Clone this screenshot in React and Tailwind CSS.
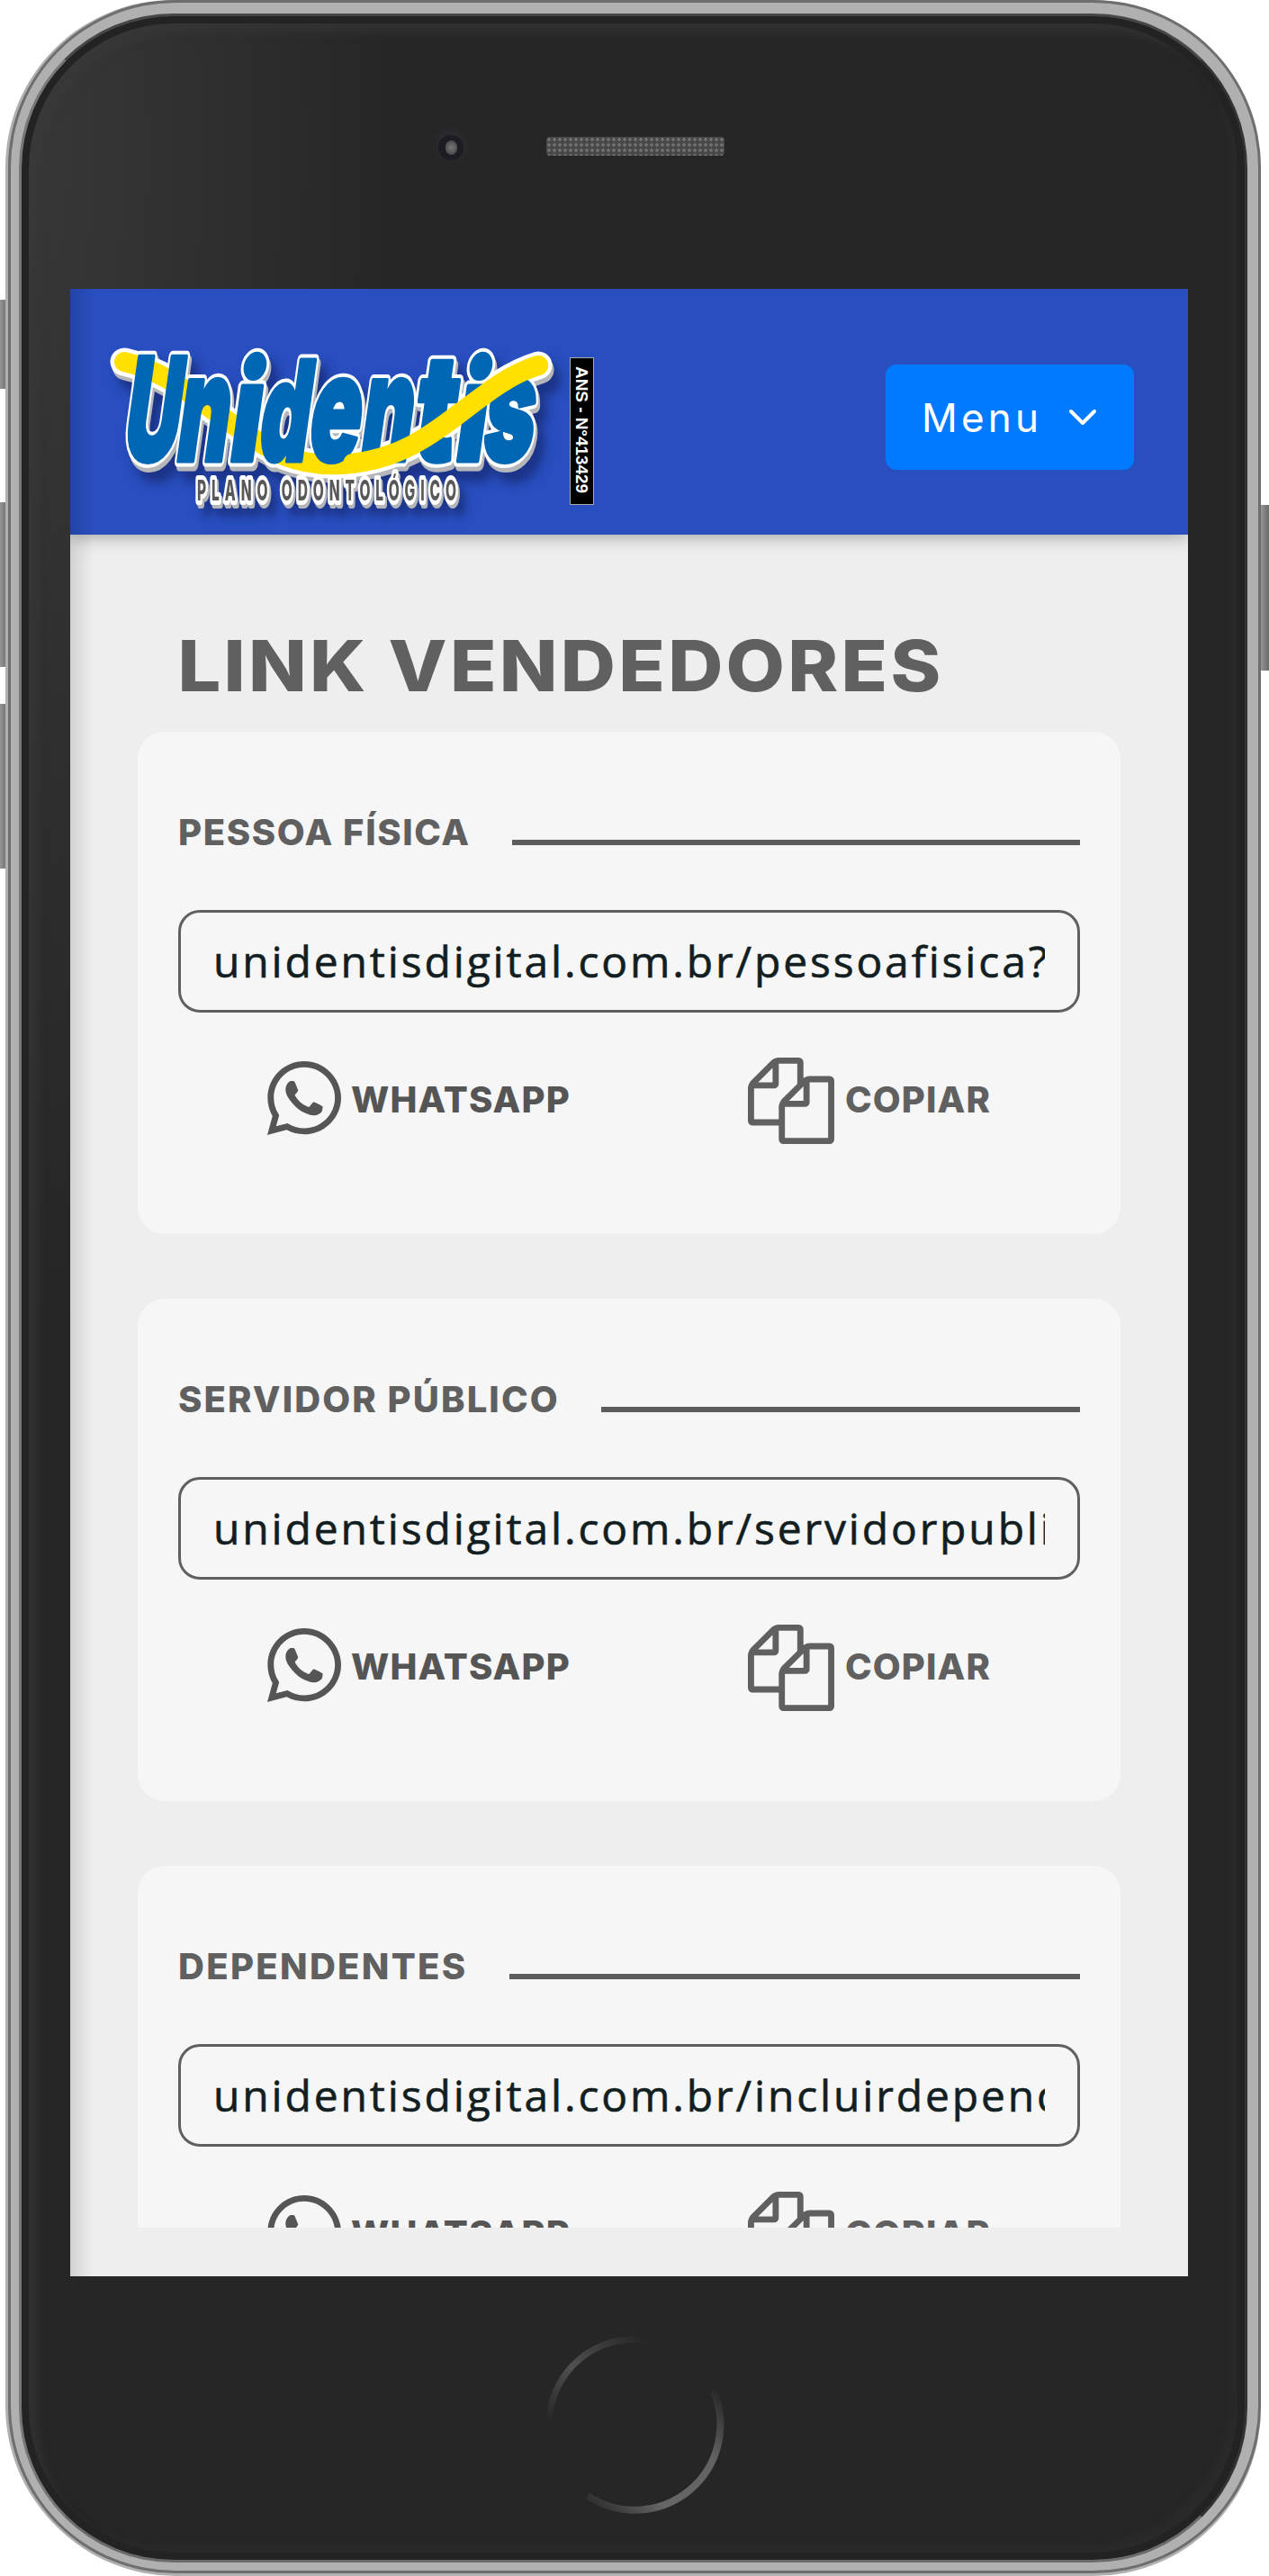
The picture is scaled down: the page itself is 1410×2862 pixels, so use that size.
import { FaWhatsapp } from "react-icons/fa";

const cards = [
  { title: "PESSOA FÍSICA", url: "unidentisdigital.com.br/pessoafisica?v=1", tracking: "tracking-[1.6px]" },
  { title: "SERVIDOR PÚBLICO", url: "unidentisdigital.com.br/servidorpublico", tracking: "tracking-[2.1px]" },
  { title: "DEPENDENTES", url: "unidentisdigital.com.br/incluirdependente", tracking: "tracking-[2.3px]" },
];

// Wordmark letters: glyph, left edge, width and font size
const letters = [
  ["U", 134, 61, 159],
  ["n", 193, 57, 164],
  ["i", 252, 33, 152],
  ["d", 284, 55, 154],
  ["e", 339, 57, 164],
  ["n", 397, 57, 164],
  ["t", 455, 46, 164],
  ["i", 503, 33, 152],
  ["s", 533, 56, 164],
];

const SMILE =
  "M138 402 C175 410 205 432 233 453 C262 474 285 492 315 506 C350 520 385 518 417 510 C490 493 535 425 598 406";
const SMILE_FRONT = "M392 515 C400 514 408 512 417 510 C490 493 535 425 598 406";

function Wordmark(props) {
  return (
    <g
      transform="translate(72.3 0) skewX(-8)"
      fontFamily="Inter, sans-serif"
      fontWeight="900"
      strokeLinejoin="round"
      {...props}
    >
      {letters.map(([ch, x, w, size], i) => (
        <text key={i} x={x} y="512" fontSize={size} textLength={w} lengthAdjust="spacingAndGlyphs">
          {ch}
        </text>
      ))}
    </g>
  );
}

function Logo() {
  return (
    <svg className="ml-[32px] mt-[54px] block h-[215px] w-[560px]" viewBox="110 375 560 215">
      <g className="[filter:drop-shadow(2px_5px_0_#b4b6ba)_drop-shadow(8px_12px_6px_rgba(16,30,90,0.55))]">
        <path d={SMILE} fill="none" stroke="#fff" strokeWidth="31" strokeLinecap="round" />
        <Wordmark fill="#fff" stroke="#fff" strokeWidth="13" />
      </g>
      <path d={SMILE} fill="none" stroke="#ffe000" strokeWidth="22" strokeLinecap="round" />
      <Wordmark fill="#0067b5" stroke="#0067b5" strokeWidth="5" />
      <path d={SMILE_FRONT} fill="none" stroke="#ffe000" strokeWidth="22" strokeLinecap="round" />
      <g className="[filter:drop-shadow(2px_4px_0_#b4b6ba)_drop-shadow(7px_10px_5px_rgba(16,30,90,0.5))]">
        <text
          transform="translate(219 555.5) scale(0.5 1)"
          fontFamily="Inter, sans-serif"
          fontWeight="800"
          fontSize="31"
          textLength="576"
          strokeLinejoin="round"
          fill="#585858"
          stroke="#fff"
          strokeWidth="10"
          paintOrder="stroke"
        >
          PLANO ODONTOLÓGICO
        </text>
      </g>
      <rect x="633.5" y="397.5" width="26" height="163" fill="#000" stroke="#a9a9a9" />
      <text
        transform="translate(640 407) rotate(90)"
        fontFamily="'Liberation Sans', sans-serif"
        fontWeight="700"
        fontSize="19"
        fill="#fff"
        textLength="141"
        lengthAdjust="spacingAndGlyphs"
      >
        ANS - N°413429
      </text>
    </svg>
  );
}

function CopyIcon() {
  return (
    <svg className="h-[96px] w-[96px]" viewBox="0 0 1792 1792" fill="#606060">
      <path d="M1696 384q40 0 68 28t28 68v1216q0 40-28 68t-68 28h-960q-40 0-68-28t-28-68v-288h-544q-40 0-68-28t-28-68v-672q0-40 20-88t48-76l408-408q28-28 76-48t88-20h416q40 0 68 28t28 68v328q68-40 128-40h416zm-544 213l-299 299h299v-299zm-640-384l-299 299h299v-299zm196 647l316-316v-416h-384v416q0 40-28 68t-68 28h-416v640h512v-256q0-40 20-88t48-76zm956 804v-1152h-384v416q0 40-28 68t-68 28h-416v640h896z" />
    </svg>
  );
}

function LinkCard({ title, url, tracking }) {
  return (
    <section className="h-[558px] w-[1092px] shrink-0 rounded-[30px] bg-[#f6f6f6] px-[45px] pt-[88px] text-[#606060]">
      <div className="flex h-[48px] items-center">
        <h2 className={"whitespace-nowrap text-[40px] font-extrabold leading-[48px] " + tracking}>{title}</h2>
        <div className="mb-[10px] ml-[46px] h-[6px] flex-1 self-end bg-[#5c5c5c]" />
      </div>
      <div className="mt-[62px] h-[114px] rounded-[24px] border-[3px] border-[#606060] px-[36px]">
        <div className="h-full overflow-hidden whitespace-nowrap font-['Open_Sans',sans-serif] text-[48px] font-medium leading-[107px] tracking-[2.85px] text-[#121e21] [-webkit-text-stroke:0.6px_#121e21]">
          {url}
        </div>
      </div>
      <div className="mt-[50px] flex h-[96px] items-center pl-[99px] text-[40px] font-extrabold leading-none tracking-[1.1px]">
        <div className="flex w-[534px] items-center gap-[11px] text-[#555]">
          <FaWhatsapp className="mb-[6px] h-[94px] w-[82px]" />
          <span className="mb-[2px]">WHATSAPP</span>
        </div>
        <div className="flex items-center gap-[12px]">
          <CopyIcon />
          <span className="mb-[2px]">COPIAR</span>
        </div>
      </div>
    </section>
  );
}

function SideButton({ className }) {
  return <div className={"absolute w-[9px] bg-linear-to-r from-[#949494] to-[#6c6c6c] " + className} />;
}

function HomeButton() {
  return (
    <svg className="h-[206px] w-[206px]" viewBox="0 0 206 206" fill="none">
      <defs>
        <linearGradient id="arcA" x1="0" y1="1" x2="1" y2="0">
          <stop offset="0" stopColor="#262626" />
          <stop offset="0.45" stopColor="#505050" />
          <stop offset="1" stopColor="#262626" />
        </linearGradient>
        <linearGradient id="arcB" x1="0" y1="1" x2="1" y2="0">
          <stop offset="0" stopColor="#262626" />
          <stop offset="0.3" stopColor="#666" />
          <stop offset="0.7" stopColor="#626262" />
          <stop offset="1" stopColor="#262626" />
        </linearGradient>
      </defs>
      <path d="M8 100 A95 95 0 0 1 117 9" stroke="url(#arcA)" strokeWidth="7" />
      <path d="M191 66 A95 95 0 0 1 51 182" stroke="url(#arcB)" strokeWidth="8" />
    </svg>
  );
}

export default function App() {
  return (
    <div className="relative h-[2862px] w-[1410px] overflow-hidden bg-white font-[Inter,sans-serif]">
      <SideButton className="left-0 top-[333px] h-[99px]" />
      <SideButton className="left-0 top-[558px] h-[183px]" />
      <SideButton className="left-0 top-[782px] h-[183px]" />
      <SideButton className="right-0 top-[561px] h-[184px]" />
      <div className="relative ml-[9px] h-[2859px] w-[1392px] rounded-[186px] bg-[#6e6e6e] p-[3px] shadow-[-3px_0_0_#b0b0b0,0_3px_0_#b0b0b0]">
        <div className="h-full rounded-[183px] bg-[#b0b0b0] pb-[9px] pl-[9px] pr-[12px] pt-[12px]">
          <div className="flex h-full flex-col rounded-[172px] border-[3px] border-b-[#6b6b6b] border-l-[#777] border-r-[#333] border-t-[#474747] bg-[#262626] bg-[radial-gradient(ellipse_420px_1300px_at_0_150px,#383838,#262626)] shadow-[inset_0_0_0_8px_#232323,inset_14px_14px_10px_4px_#3b3b3b88,inset_-12px_-12px_8px_4px_#30303066]">
            <div className="flex h-[303px] shrink-0 justify-center pl-[4px] pt-[134px]">
              <div className="mr-[92px] -mt-[2px] flex size-[28px] items-center justify-center rounded-full bg-[#1c1c22] shadow-[0_-3px_6px_4px_#2b2b30]">
                <div className="h-[16px] w-[13px] rounded-full bg-[radial-gradient(circle,#777,#3a3a3e)]" />
              </div>
              <div className="mr-[119px] h-[21px] w-[198px] rounded-[4px] bg-[#484848] bg-[radial-gradient(circle,#707070_1.5px,transparent_2px)] bg-[size:6px_6px]" />
            </div>
            <main className="relative ml-[54px] flex h-[2208px] w-[1242px] shrink-0 flex-col bg-[#eee]">
              <header className="relative z-10 flex h-[273px] shrink-0 justify-between bg-[#284ebf] shadow-[0_0_20px_rgba(0,0,0,0.4)] [clip-path:inset(0_0_-30px_0)]">
                <Logo />
                <button className="mr-[60px] mt-[84px] flex h-[117px] w-[276px] items-center rounded-[12px] bg-[#007bff] pl-[40px] text-[44px] leading-none tracking-[4.2px] text-white">
                  Menu
                  <svg className="ml-[29px] h-[20px] w-[32px]" viewBox="0 0 32 20" fill="none">
                    <path d="M3 3 L16 16 L29 3" stroke="#fff" strokeWidth="4" strokeLinecap="round" strokeLinejoin="round" />
                  </svg>
                </button>
              </header>
              <div className="h-[1881px] overflow-hidden pl-[75px] pt-[72px]">
                <h1 className="h-[147px] w-[1092px] origin-left scale-x-[1.085] whitespace-nowrap pl-[41px] text-[78px] font-extrabold leading-[147px] tracking-[3px] text-[#606060]">
                  LINK VENDEDORES
                </h1>
                <div className="flex flex-col gap-[72px]">
                  {cards.map((c) => (
                    <LinkCard key={c.title} {...c} />
                  ))}
                </div>
              </div>
              <div className="absolute inset-y-0 left-0 z-20 w-[26px] bg-linear-to-r from-black/12 to-transparent" />
            </main>
            <div className="flex h-[315px] shrink-0 justify-center pl-[2px] pt-[62px]">
              <HomeButton />
            </div>
          </div>
        </div>
      </div>
    </div>
  );
}
